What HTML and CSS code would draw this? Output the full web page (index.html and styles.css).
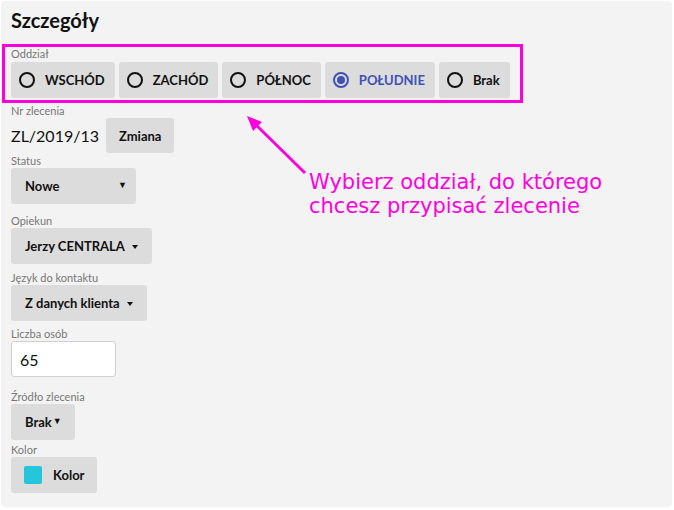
FILE: index.html
```html
<!DOCTYPE html>
<html lang="pl">
<head>
<meta charset="utf-8">
<title>Szczegóły</title>
<link rel="stylesheet" href="styles.css">
</head>
<body>
<div class="panel">
  <h1 class="title">Szczegóły</h1>

  <div class="field field-branch">
    <div class="label">Oddział</div>
    <div class="options">
      <button class="opt"><span class="radio"></span>WSCHÓD</button>
      <button class="opt"><span class="radio"></span>ZACHÓD</button>
      <button class="opt"><span class="radio"></span>PÓŁNOC</button>
      <button class="opt opt-active"><span class="radio radio-on"></span>POŁUDNIE</button>
      <button class="opt"><span class="radio"></span>Brak</button>
    </div>
  </div>

  <div class="field field-nr">
    <div class="label">Nr zlecenia</div>
    <div class="nr-row">
      <span class="nr-value">ZL/2019/13</span>
      <button class="btn btn-change">Zmiana</button>
    </div>
  </div>

  <div class="field field-status">
    <div class="label">Status</div>
    <button class="btn btn-status"><span>Nowe</span><span class="big-caret">▼</span></button>
  </div>

  <div class="field field-owner">
    <div class="label">Opiekun</div>
    <button class="btn btn-drop">Jerzy CENTRALA<span class="caret"></span></button>
  </div>

  <div class="field field-lang">
    <div class="label">Język do kontaktu</div>
    <button class="btn btn-drop">Z danych klienta<span class="caret"></span></button>
  </div>

  <div class="field field-count">
    <div class="label">Liczba osób</div>
    <input class="input" type="text" value="65">
  </div>

  <div class="field field-source">
    <div class="label">Źródło zlecenia</div>
    <button class="btn btn-source">Brak<span class="big-caret small">▼</span></button>
  </div>

  <div class="field field-color">
    <div class="label">Kolor</div>
    <button class="btn btn-color"><span class="swatch"></span>Kolor</button>
  </div>
</div>

<div class="highlight"></div>
<svg class="arrow" width="674" height="510" viewBox="0 0 674 510">
  <line x1="305" y1="173" x2="255" y2="124" stroke="#ff00dd" stroke-width="3"/>
  <polygon points="247,116 262,122 253,131" fill="#ff00dd"/>
</svg>
<div class="note">Wybierz oddział, do którego<br>chcesz przypisać zlecenie</div>
</body>
</html>
```

FILE: styles.css
```css
* { box-sizing: border-box; }

html, body {
  margin: 0;
  padding: 0;
  background: #ffffff;
}

body {
  position: relative;
  width: 674px;
  height: 510px;
  font-family: Lato, "Liberation Sans", sans-serif;
  color: #111;
}

.panel {
  margin: 1px 0 0 1px;
  width: 671px;
  height: 506px;
  background: #f3f3f3;
  border-radius: 4px;
  padding: 7px 10px 0 10px;
}

.title {
  margin: 0;
  font-size: 20px;
  line-height: 24px;
  font-weight: 700;
  color: #111;
}

.label {
  font-size: 11px;
  line-height: 15px;
  color: #777777;
}

.field-branch { margin-top: 14px; }
.field-branch .label { margin-bottom: 1px; }
.field-nr { margin-top: 5px; }
.field-status { margin-top: 0; }
.field-owner { margin-top: 9px; }
.field-lang { margin-top: 6px; }
.field-count { margin-top: 5px; }
.field-source { margin-top: 12px; }
.field-color { margin-top: 2px; }

.options {
  display: flex;
  gap: 4px;
}

button {
  font-family: inherit;
  border: none;
  cursor: pointer;
}

.opt {
  display: flex;
  align-items: center;
  height: 36px;
  padding: 0 10px 0 8px;
  background: #dcdcdc;
  border-radius: 3px;
  font-size: 13px;
  font-weight: 700;
  color: #111;
  gap: 10px;
}

.opt-active { color: #3f51b5; }

.radio {
  width: 16px;
  height: 16px;
  border: 2px solid #111;
  border-radius: 50%;
  flex: none;
  position: relative;
}

.radio-on {
  border-color: #3f51b5;
}

.radio-on::after {
  content: "";
  position: absolute;
  left: 2px;
  top: 2px;
  width: 8px;
  height: 8px;
  border-radius: 50%;
  background: #3f51b5;
}

.nr-row {
  display: flex;
  align-items: center;
  gap: 7px;
}

.nr-value {
  font-size: 16px;
  color: #111;
}

.btn {
  display: flex;
  align-items: center;
  height: 36px;
  background: #dcdcdc;
  border-radius: 3px;
  font-size: 13px;
  font-weight: 700;
  color: #111;
}

.btn-change {
  height: 35px;
  padding: 0 13px;
}

.btn-status {
  width: 125px;
  padding: 0 9px 0 14px;
  justify-content: space-between;
}

.big-caret {
  font-size: 9px;
  line-height: 1;
  margin-top: -3px;
}

.big-caret.small {
  margin-left: 1px;
}

.btn-drop {
  padding: 0 14px 0 14px;
}

.caret {
  display: inline-block;
  width: 0;
  height: 0;
  margin-left: 7px;
  margin-top: 2px;
  border-left: 3px solid transparent;
  border-right: 3px solid transparent;
  border-top: 4px solid #111;
}

.btn-source {
  padding: 0 13px 0 14px;
}

.btn-color {
  padding: 0 13px 0 13px;
  gap: 11px;
}

.swatch {
  width: 18px;
  height: 18px;
  border-radius: 2px;
  background: #26c6da;
}

.input {
  display: block;
  width: 105px;
  height: 36px;
  border: 1px solid #cfcfcf;
  border-radius: 3px;
  background: #fff;
  padding: 0 0 0 8px;
  font-family: inherit;
  font-size: 16px;
  color: #111;
}

.highlight {
  position: absolute;
  left: 2px;
  top: 44px;
  width: 521px;
  height: 59px;
  border: 3px solid #ff00dd;
}

.arrow {
  position: absolute;
  left: 0;
  top: 0;
  pointer-events: none;
}

.note {
  position: absolute;
  left: 309px;
  top: 170px;
  font-family: "DejaVu Sans", sans-serif;
  font-size: 21px;
  line-height: 24px;
  color: #ff00dd;
  white-space: nowrap;
}
```
